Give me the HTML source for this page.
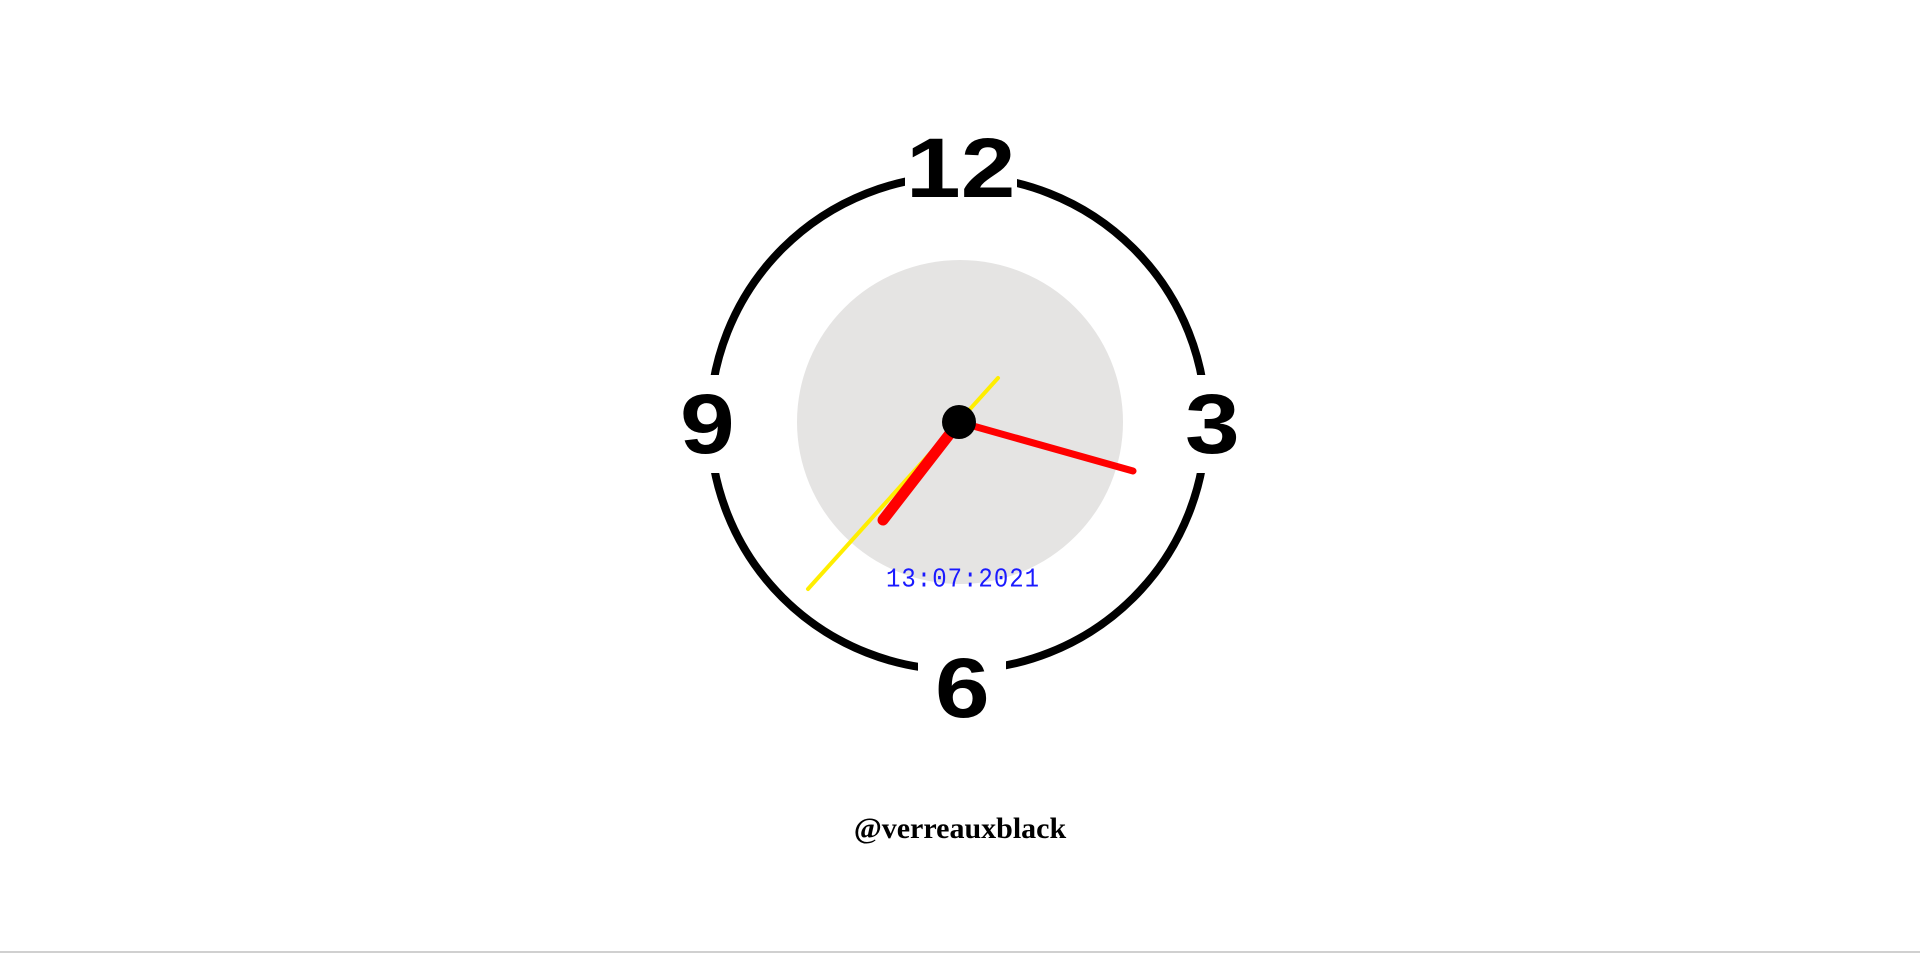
<!DOCTYPE html>
<html><head><meta charset="utf-8"><style>
html,body{margin:0;padding:0;background:#fff;width:1920px;height:954px;overflow:hidden;position:relative}
.n{position:absolute;font-family:"Liberation Sans",sans-serif;font-weight:bold;font-size:84px;line-height:1;color:#000;background:#fff;text-align:center;display:flex;align-items:center;justify-content:center}
.n span{display:inline-block;transform:scaleX(1.17)}
.foot{position:absolute;left:0;width:1920px;top:812px;text-align:center;font:bold 30px "Liberation Serif",serif;color:#000}
.line{position:absolute;left:0;top:951px;width:1920px;height:2px;background:#d0d0d0}
.date{position:absolute;left:886px;top:567px;width:154px;text-align:center;font:24px "Liberation Mono",monospace;color:#1a1aff;letter-spacing:1px;transform:scaleY(1.1)}
</style></head><body>
<svg width="1920" height="954" style="position:absolute;left:0;top:0">
<ellipse cx="958" cy="423" rx="248" ry="247" fill="none" stroke="#000" stroke-width="8"/>
<ellipse cx="960" cy="422" rx="163" ry="162" fill="#e5e4e3"/>
</svg>
<div class="n" style="left:905px;top:128px;width:112px;height:80px"><span>12</span></div>
<div class="n" style="left:674px;top:375px;width:66px;height:98px"><span>9</span></div>
<div class="n" style="left:1179px;top:375px;width:66px;height:98px"><span>3</span></div>
<div class="n" style="left:918px;top:650px;width:88px;height:76px"><span>6</span></div>
<div class="date">13:07:2021</div>
<svg width="1920" height="954" style="position:absolute;left:0;top:0">
<line x1="808" y1="589" x2="998" y2="378" stroke="#ffee00" stroke-width="4" stroke-linecap="round"/>
<line x1="959" y1="422" x2="883" y2="520" stroke="#f00" stroke-width="11" stroke-linecap="round"/>
<line x1="959" y1="422" x2="1133" y2="471" stroke="#f00" stroke-width="7" stroke-linecap="round"/>
<circle cx="959" cy="422" r="17" fill="#000"/>
</svg>
<div class="foot">@verreauxblack</div>
<div class="line"></div>
</body></html>
